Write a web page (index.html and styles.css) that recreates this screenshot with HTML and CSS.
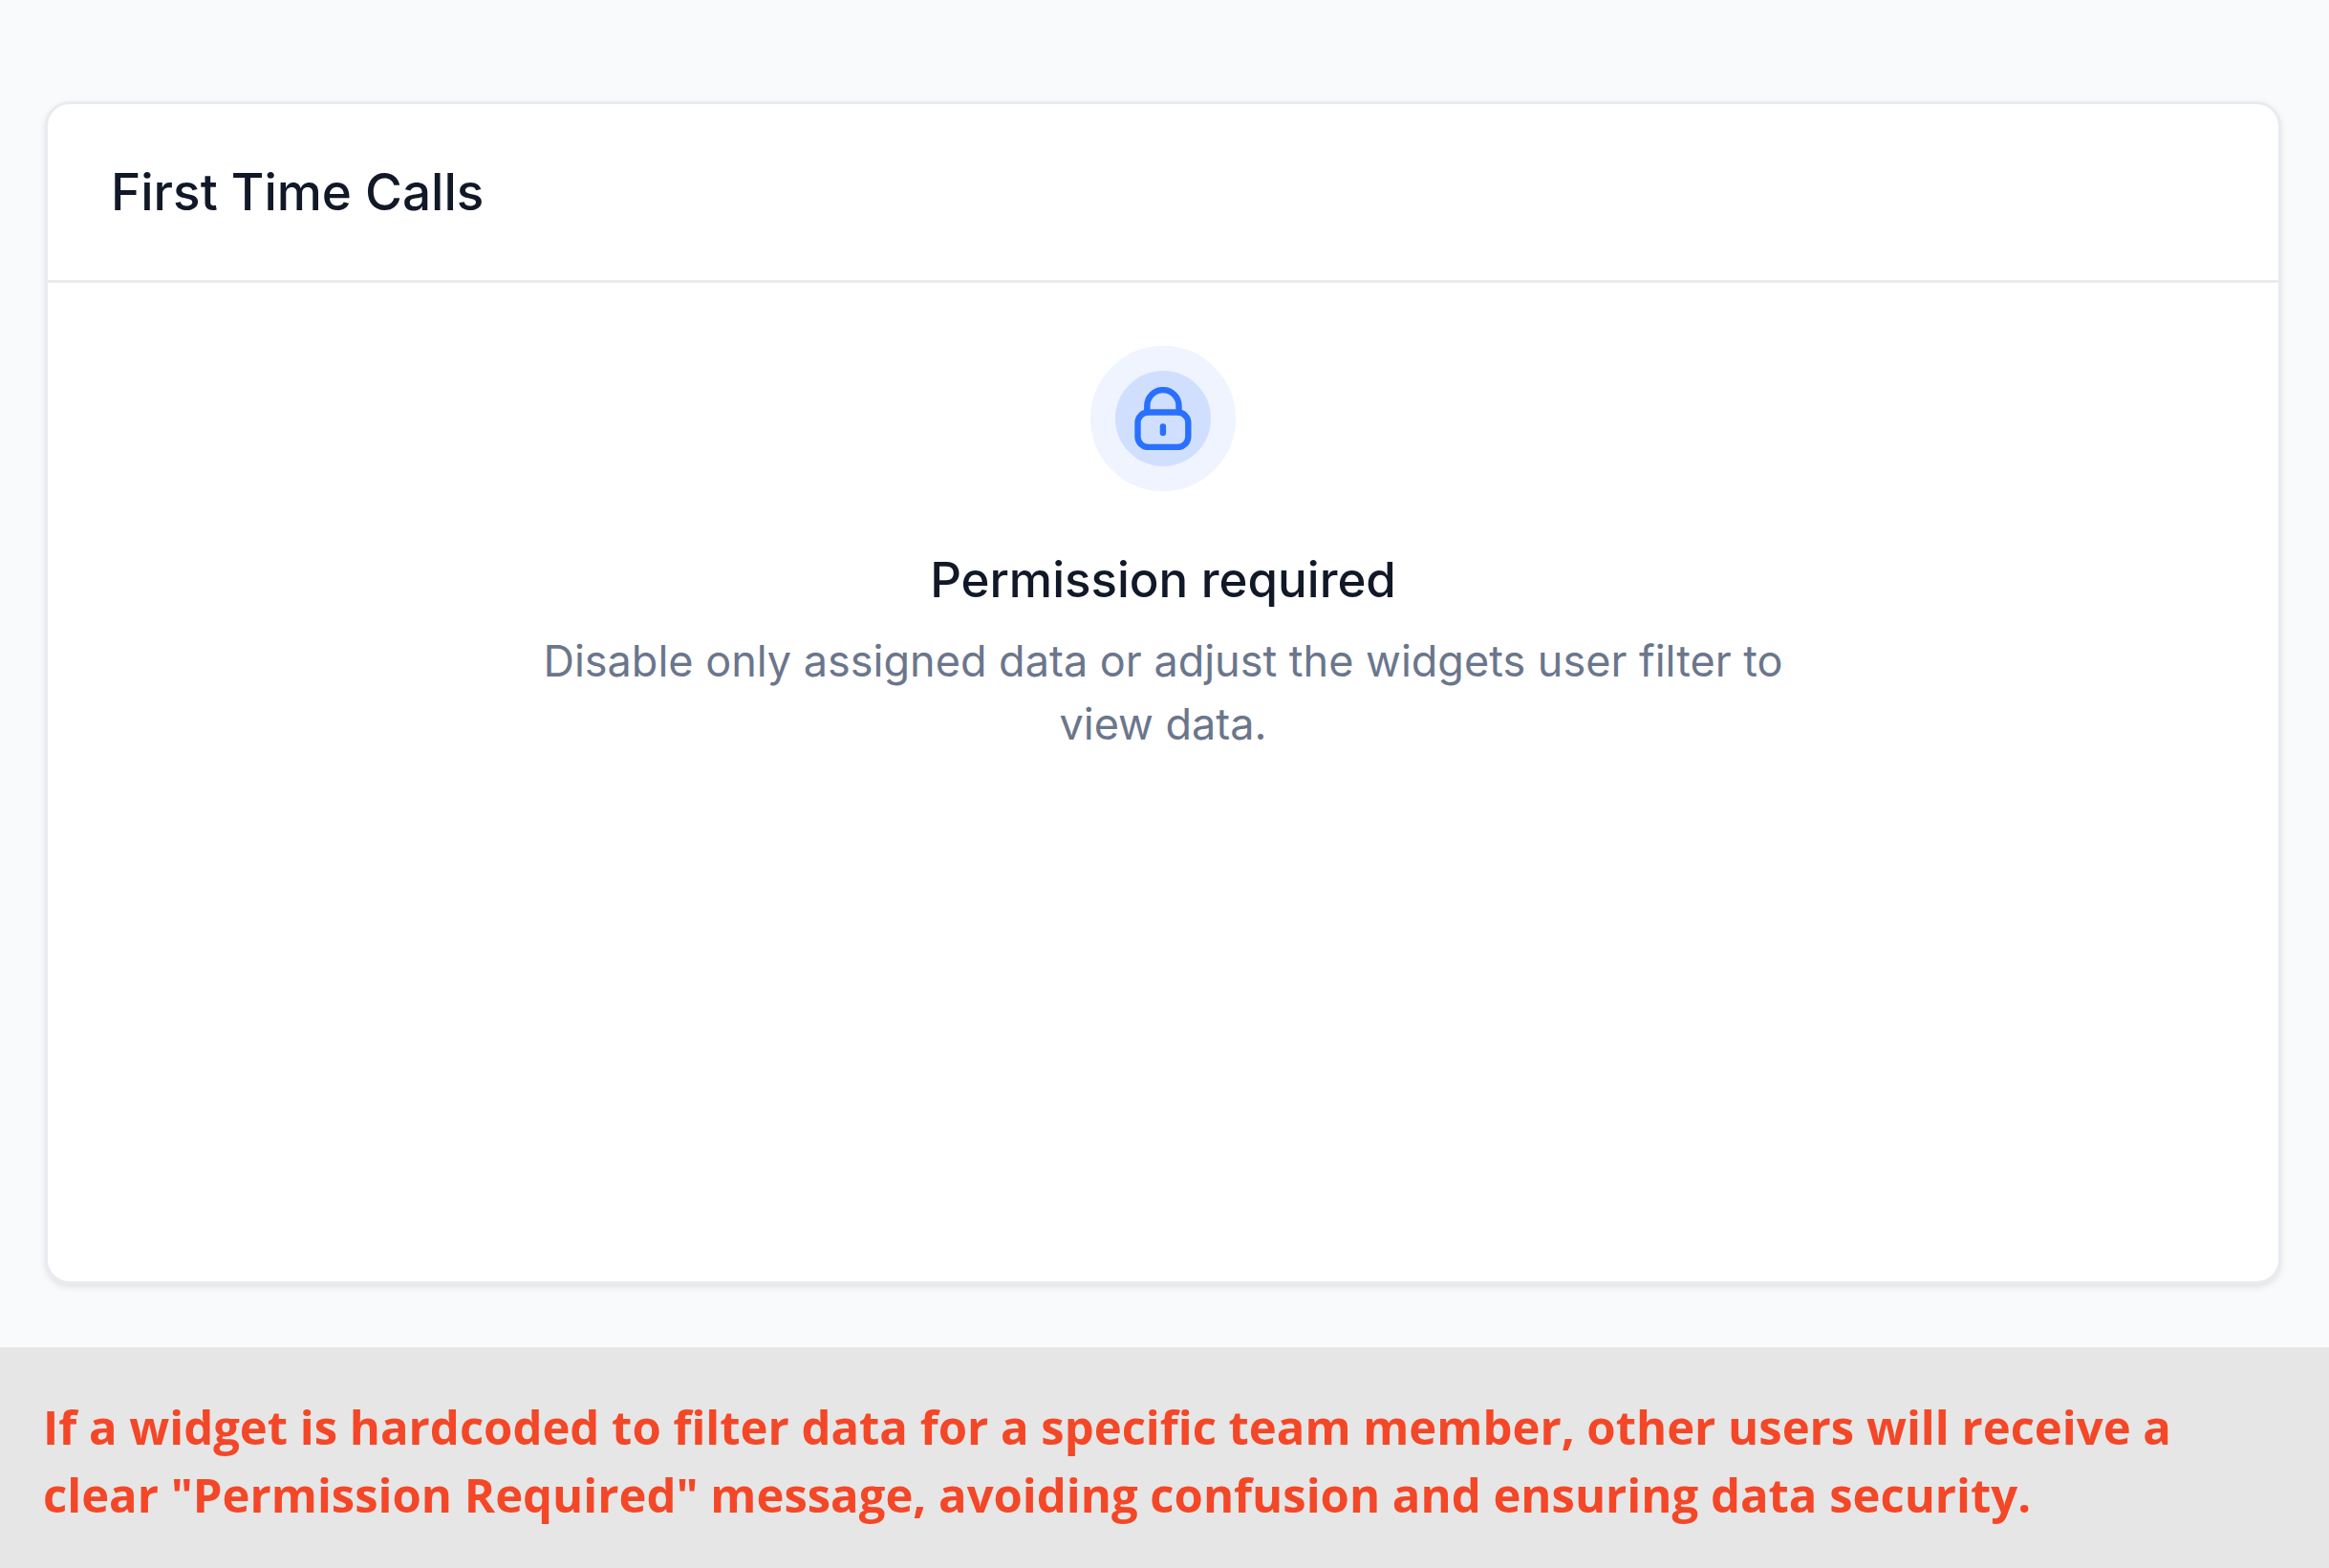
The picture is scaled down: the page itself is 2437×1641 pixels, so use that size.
FILE: index.html
```html
<!DOCTYPE html>
<html lang="en">
  <head>
    <meta charset="UTF-8" />
    <meta name="viewport" content="width=device-width, initial-scale=1.0" />
    <title>First Time Calls</title>
    <link rel="stylesheet" href="styles.css">
  </head>
  <body>
    <main class="board">
      <section class="card">
        <header class="card-header">
          <h1>First Time Calls</h1>
        </header>
        <div class="empty">
          <div class="empty-icon">
            <svg viewBox="0 0 66 66" aria-hidden="true">
              <rect x="6.5" y="26.5" width="52.8" height="36.5" rx="11" />
              <path d="M16.3 26.5V19.7a16.6 16.6 0 0 1 33.2 0v6.8" />
              <path d="M32.9 41.5v6.5" />
            </svg>
          </div>
          <h2>Permission required</h2>
          <p>Disable only assigned data or adjust the widgets user filter to view data.</p>
        </div>
      </section>
    </main>
    <footer class="note">
      <p>If a widget is hardcoded to filter data for a specific team member, other users will receive a clear "Permission Required" message, avoiding confusion and ensuring data security.</p>
    </footer>
  </body>
</html>
```

FILE: styles.css
```css
* {
  margin: 0;
  padding: 0;
  box-sizing: border-box;
}
body {
  min-height: 100vh;
  display: flex;
  flex-direction: column;
  background-color: #f9fafc;
  color: #111827;
  font-family: Inter, "Liberation Sans", sans-serif;
}
.board {
  flex: 1;
  display: flex;
  padding: 106px 50px 66px 47px;
}
.card {
  flex: 1;
  background-color: #fff;
  border: 3px solid #e9ebf0;
  border-radius: 26px;
  box-shadow: 0 3px 7px rgba(0, 0, 0, 0.1);
}
.card-header {
  padding: 52px 66px;
  border-bottom: 3px solid #e9ebf0;
}
h1,
h2 {
  font-size: 53px;
  line-height: 80px;
  font-weight: 500;
}
h2 {
  font-size: 51px;
}
.empty {
  display: flex;
  flex-direction: column;
  align-items: center;
  padding: 66px;
  text-align: center;
}
.empty-icon {
  display: flex;
  align-items: center;
  justify-content: center;
  width: 152px;
  height: 152px;
  margin-bottom: 53px;
  border: 26px solid #eff4ff;
  border-radius: 50%;
  background-color: #d1dfff;
}
.empty-icon svg {
  flex: none;
  width: 66px;
  height: 66px;
  fill: none;
  stroke: #2970ff;
  stroke-width: 6.4;
  stroke-linecap: round;
  stroke-linejoin: round;
}
.empty p {
  max-width: 1325px;
  margin-top: 12px;
  color: #6b768c;
  font-size: 45px;
  line-height: 66px;
}
.note {
  padding: 48px 45px 41px;
  background-color: #e6e6e6;
  color: #f44727;
  font-family: "Open Sans", sans-serif;
  font-size: 49px;
  line-height: 71px;
  font-weight: 700;
}
```
